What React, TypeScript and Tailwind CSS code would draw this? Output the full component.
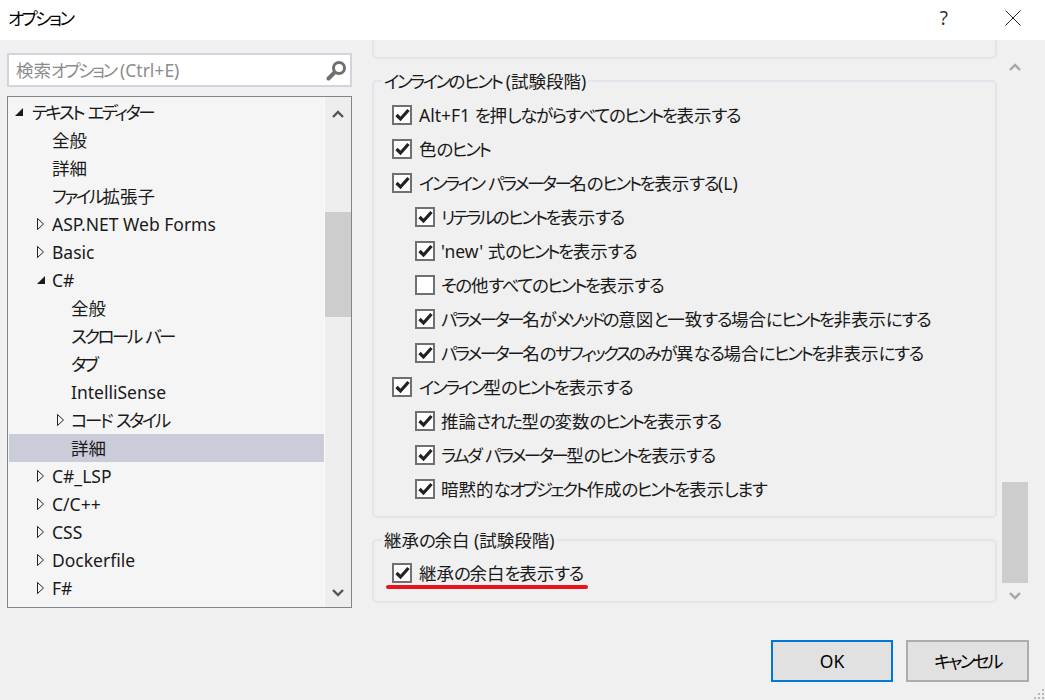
type TreeRow = { label: string; indent: number; arrow?: "open" | "closed"; selected?: boolean };

const TREE: TreeRow[] = [
  { label: "テキスト エディター", indent: 0, arrow: "open" },
  { label: "全般", indent: 1 },
  { label: "詳細", indent: 1 },
  { label: "ファイル拡張子", indent: 1 },
  { label: "ASP.NET Web Forms", indent: 1, arrow: "closed" },
  { label: "Basic", indent: 1, arrow: "closed" },
  { label: "C#", indent: 1, arrow: "open" },
  { label: "全般", indent: 2 },
  { label: "スクロール バー", indent: 2 },
  { label: "タブ", indent: 2 },
  { label: "IntelliSense", indent: 2 },
  { label: "コード スタイル", indent: 2, arrow: "closed" },
  { label: "詳細", indent: 2, selected: true },
  { label: "C#_LSP", indent: 1, arrow: "closed" },
  { label: "C/C++", indent: 1, arrow: "closed" },
  { label: "CSS", indent: 1, arrow: "closed" },
  { label: "Dockerfile", indent: 1, arrow: "closed" },
  { label: "F#", indent: 1, arrow: "closed" },
];

const HINTS: { label: string; nested?: boolean; checked: boolean }[] = [
  { label: "Alt+F1 を押しながらすべてのヒントを表示する", checked: true },
  { label: "色のヒント", checked: true },
  { label: "インライン パラメーター名のヒントを表示する(L)", checked: true },
  { label: "リテラルのヒントを表示する", nested: true, checked: true },
  { label: "'new' 式のヒントを表示する", nested: true, checked: true },
  { label: "その他すべてのヒントを表示する", nested: true, checked: false },
  { label: "パラメーター名がメソッドの意図と一致する場合にヒントを非表示にする", nested: true, checked: true },
  { label: "パラメーター名のサフィックスのみが異なる場合にヒントを非表示にする", nested: true, checked: true },
  { label: "インライン型のヒントを表示する", checked: true },
  { label: "推論された型の変数のヒントを表示する", nested: true, checked: true },
  { label: "ラムダ パラメーター型のヒントを表示する", nested: true, checked: true },
  { label: "暗黙的なオブジェクト作成のヒントを表示します", nested: true, checked: true },
];

// the UI font in the picture squeezes kana but not kanji or latin
function Jp({ text }: { text: string }) {
  const parts = text.split(/([\u30A0-\u30FF]+|[\u3040-\u309F]+)/).filter(Boolean);
  return (
    <>
      {parts.map((p, i) => {
        if (/^[\u30A0-\u30FF]/.test(p)) return <span key={i} className="tracking-[-2.5px]">{p}</span>;
        if (/^[\u3040-\u309F]/.test(p)) return <span key={i} className="tracking-[-1.4px]">{p}</span>;
        return <span key={i}>{p}</span>;
      })}
    </>
  );
}

function Chevron({ up, color }: { up?: boolean; color: string }) {
  return (
    <svg width="14" height="10" viewBox="0 0 14 10" fill="none" stroke={color} strokeWidth="2.4">
      <path d={up ? "M2 8 L7 3 L12 8" : "M2 2 L7 7 L12 2"} />
    </svg>
  );
}

function TreeArrow({ kind }: { kind?: "open" | "closed" }) {
  if (kind === "open") {
    return (
      <svg width="10" height="10" viewBox="0 0 10 10">
        <path d="M9 1 V9 H1 Z" fill="#1a1a1a" />
      </svg>
    );
  }
  if (kind === "closed") {
    return (
      <svg width="9" height="14" viewBox="0 0 9 14" fill="none" stroke="#222" strokeWidth="1">
        <path d="M1.5 1.5 L7.5 7 L1.5 12.5 Z" />
      </svg>
    );
  }
  return null;
}

function SearchIcon() {
  return (
    <svg width="21" height="21" viewBox="0 0 21 21" fill="none" stroke="#707070">
      <circle cx="13" cy="8" r="5.5" strokeWidth="3" />
      <path d="M8.5 12.5 L2.5 18.5" strokeWidth="4" strokeLinecap="round" />
    </svg>
  );
}

function Checkbox({ checked }: { checked: boolean }) {
  return (
    <div className="w-5 h-5 shrink-0 border-2 border-[#707070] bg-white flex items-center justify-center">
      {checked && (
        <svg width="15" height="14" viewBox="0 0 15 14" fill="none" stroke="#222" strokeWidth="3.2">
          <path d="M1.5 7 L5.5 11 L13.5 2" />
        </svg>
      )}
    </div>
  );
}

function CheckRow({ label, nested, checked }: { label: string; nested?: boolean; checked: boolean }) {
  return (
    <div className={`h-[34px] flex items-center ${nested ? "pl-[41px] gap-[6px]" : "pl-[18px] gap-[7px]"}`}>
      <Checkbox checked={checked} />
      <span className="whitespace-nowrap">
        <Jp text={label} />
      </span>
    </div>
  );
}

export default function App() {
  return (
    <div
      className="w-[1045px] h-[700px] flex flex-col overflow-hidden bg-[#f0f0f0] text-[17.5px] text-[#1a1a1a] relative [font-feature-settings:'palt']"
      style={{ fontFamily: '"Noto Sans", "Noto Sans CJK JP", sans-serif' }}
    >
      {/* Title bar */}
      <div className="h-10 shrink-0 bg-white flex items-center pl-2 pr-6 pb-1">
        <span className="flex-1 text-black">
          <Jp text="オプション" />
        </span>
        <span className="text-[19px] text-[#333] mr-[57px] leading-none">?</span>
        <svg width="16" height="16" viewBox="0 0 16 16" stroke="#222" strokeWidth="1">
          <path d="M0.5 0.5 L15.5 15.5 M15.5 0.5 L0.5 15.5" />
        </svg>
      </div>

      <div className="flex flex-1 min-h-0">
        {/* Left column */}
        <div className="w-[372px] shrink-0 pl-[7px] pr-[20px] pt-[13px]">
          <div className="h-[34px] bg-white border-2 border-[#d3d3de] flex items-center pl-[7px] pr-[3px]">
            <span className="flex-1 text-[#8c8c8c]">
              <Jp text="検索オプション (Ctrl+E)" />
            </span>
            <SearchIcon />
          </div>

          <div className="mt-[9px] h-[512px] border border-[#83838c] flex overflow-hidden">
            <div className="flex-1 bg-[#f5f5f5] pt-px pl-px border-r border-[#fafafa]">
              {TREE.map((row, i) => (
                <div
                  key={i}
                  className={`h-[28px] flex items-center whitespace-nowrap ${row.selected ? "bg-[#cbccda]" : ""}`}
                >
                  <div
                    className={`flex justify-center shrink-0 ${
                      row.indent === 0 ? "w-[23px] pr-[3px]" : row.indent === 1 ? "w-[43px] pl-[20px]" : "w-[62px] pl-[40px]"
                    }`}
                  >
                    <TreeArrow kind={row.arrow} />
                  </div>
                  <span>
                    <Jp text={row.label} />
                  </span>
                </div>
              ))}
            </div>
            <div className="w-[26px] shrink-0 bg-[#eeeeee] flex flex-col items-center">
              <div className="h-[12px] shrink-0" />
              <Chevron up color="#555" />
              <div className="h-[93px] shrink-0" />
              <div className="w-full h-[105px] bg-[#cdcdcd] shrink-0" />
              <div className="flex-1" />
              <Chevron color="#555" />
              <div className="h-[9px] shrink-0" />
            </div>
          </div>
        </div>

        {/* Right column */}
        <div className="flex-1 flex min-w-0">
          <div className="w-[625px] shrink-0">
            <div className="h-[19px] border-2 border-t-0 border-[#e2e5ec] rounded-b-[5px]" />

            <fieldset className="mt-[13px] h-[446px] border-2 border-[#e2e5ec] rounded-[5px] pt-[8px]">
              <legend className="ml-[8px] px-[2px] leading-[18px]">
                <Jp text="インラインのヒント (試験段階)" />
              </legend>
              {HINTS.map((h) => (
                <CheckRow key={h.label} label={h.label} nested={h.nested} checked={h.checked} />
              ))}
            </fieldset>

            <fieldset className="mt-[13px] h-[72px] border-2 border-[#e2e5ec] rounded-[5px] pt-[7px]">
              <legend className="ml-[8px] px-[2px] leading-[18px]">
                <Jp text="継承の余白 (試験段階)" />
              </legend>
              <CheckRow label="継承の余白を表示する" checked />
            </fieldset>
          </div>

          <div className="w-[26px] ml-[5px] shrink-0 flex flex-col items-center">
            <div className="h-[22px] shrink-0" />
            <Chevron up color="#a6a6a6" />
            <div className="h-[410px] shrink-0" />
            <div className="w-full h-[101px] bg-[#cdcdcd] shrink-0" />
            <div className="h-[8px] shrink-0" />
            <Chevron color="#a6a6a6" />
          </div>
        </div>
      </div>

      {/* Footer buttons */}
      <div className="h-[60px] shrink-0 flex justify-end items-start gap-[13px] pr-4">
        <button className="w-[122px] h-[42px] border-2 border-[#0078d7] bg-[#e1e1e1] text-black">OK</button>
        <button className="w-[123px] h-[42px] border-2 border-[#adadad] bg-[#e1e1e1] text-black">
          <Jp text="キャンセル" />
        </button>
      </div>

      {/* Red annotation under the checkbox label */}
      <div className="absolute left-[386px] top-[585px] w-[202px] h-1 rounded-full bg-[#e8141c]" />

      {/* Resize grip */}
      <svg className="absolute right-0 bottom-0" width="12" height="12" viewBox="0 0 12 12" fill="#b8b8b8">
        <rect x="9" y="1" width="2" height="2" />
        <rect x="5" y="5" width="2" height="2" />
        <rect x="9" y="5" width="2" height="2" />
        <rect x="1" y="9" width="2" height="2" />
        <rect x="5" y="9" width="2" height="2" />
        <rect x="9" y="9" width="2" height="2" />
      </svg>
    </div>
  );
}
